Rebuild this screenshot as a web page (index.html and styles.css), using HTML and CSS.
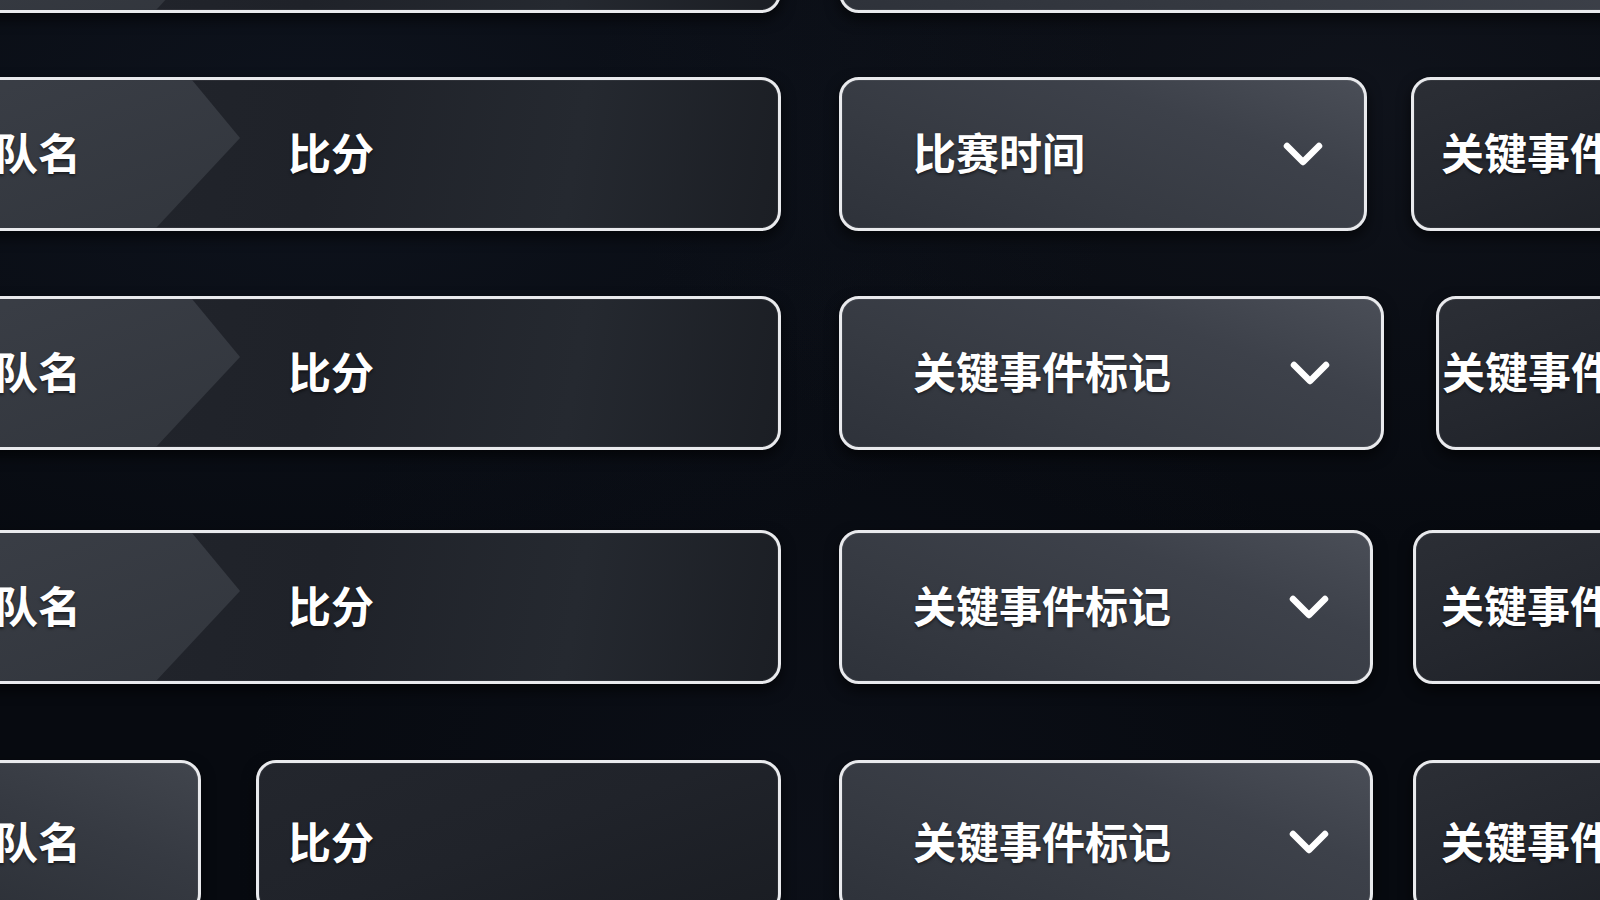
FILE: index.html
```html
<!DOCTYPE html>
<html>

<head>
    <meta charset="UTF-8" />
    <title>比赛信息面板</title>
    <link rel="stylesheet" href="styles.css">
</head>

<body>
    <main class="board">
        <div class="row row-top">
            <div class="card card-score"></div>
            <div class="card card-select card-open"></div>
        </div>

        <div class="row row-1">
            <div class="card card-score">
                <span class="team">队名</span>
                <span class="score">比分</span>
            </div>
            <div class="card card-select">
                <span class="label">比赛时间</span>
                <svg class="chevron" viewBox="0 0 40 24"><polyline points="4,4 20,20 36,4" /></svg>
            </div>
            <div class="card card-event">
                <span class="label">关键事件标记</span>
            </div>
        </div>

        <div class="row row-2">
            <div class="card card-score">
                <span class="team">队名</span>
                <span class="score">比分</span>
            </div>
            <div class="card card-select">
                <span class="label">关键事件标记</span>
                <svg class="chevron" viewBox="0 0 40 24"><polyline points="4,4 20,20 36,4" /></svg>
            </div>
            <div class="card card-event">
                <span class="label">关键事件标记</span>
            </div>
        </div>

        <div class="row row-3">
            <div class="card card-score">
                <span class="team">队名</span>
                <span class="score">比分</span>
            </div>
            <div class="card card-select">
                <span class="label">关键事件标记</span>
                <svg class="chevron" viewBox="0 0 40 24"><polyline points="4,4 20,20 36,4" /></svg>
            </div>
            <div class="card card-event">
                <span class="label">关键事件标记</span>
            </div>
        </div>

        <div class="row row-4">
            <div class="card card-team">
                <span class="label">队名</span>
            </div>
            <div class="card card-points">
                <span class="label">比分</span>
            </div>
            <div class="card card-select">
                <span class="label">关键事件标记</span>
                <svg class="chevron" viewBox="0 0 40 24"><polyline points="4,4 20,20 36,4" /></svg>
            </div>
            <div class="card card-event">
                <span class="label">关键事件标记</span>
            </div>
        </div>
    </main>
</body>

</html>
```

FILE: styles.css
```css
html,
body {
    height: 100%;
}

body {
    margin: 0;
    overflow: hidden;
    font-family: "Noto Sans CJK SC", "Noto Sans", sans-serif;
    color: #fff;
    background-color: #070a10;
    background-image:
        radial-gradient(ellipse at 20% 15%, rgba(30, 40, 60, 0.3), transparent 45%),
        radial-gradient(ellipse at 85% 10%, rgba(40, 45, 60, 0.25), transparent 40%),
        radial-gradient(ellipse at 50% 95%, rgba(25, 30, 45, 0.25), transparent 50%);
}

.board {
    display: flex;
    flex-direction: column;
    margin-top: -141px;
    margin-left: -60px;
}

.row {
    display: flex;
    height: 154px;
}

.row-1 {
    margin-top: 64px;
}

.row-2 {
    margin-top: 65px;
}

.row-3 {
    margin-top: 80px;
}

.row-4 {
    margin-top: 76px;
}

.card {
    position: relative;
    box-sizing: border-box;
    height: 154px;
    flex-shrink: 0;
    display: flex;
    align-items: center;
    padding-bottom: 5px;
    border: 3px solid #e9eaed;
    border-radius: 20px;
    overflow: hidden;
    font-size: 43px;
    font-weight: bold;
    line-height: 1;
    white-space: nowrap;
    box-shadow: 0 6px 14px rgba(0, 0, 0, 0.65), inset 0 0 0 1px rgba(255, 255, 255, 0.06);
}

.card span {
    position: relative;
    text-shadow: 0 2px 3px rgba(0, 0, 0, 0.5);
}

/* team + score strip */
.card-score {
    width: 841px;
    padding-left: 52px;
    background: linear-gradient(100deg, #23262d 0%, #1f2229 45%, #252930 75%, #1b1e24 100%);
}

.card-score::before {
    content: "";
    position: absolute;
    inset: 0;
    background: linear-gradient(160deg, #3a3e46 0%, #31353c 60%, #2b2f36 100%);
    clip-path: polygon(0 0, 249px 0, 297px 58px, 213px 100%, 0 100%);
}

.team {
    width: 233px;
}

.score {
    margin-left: 60px;
}

/* dropdown */
.card-select {
    width: 534px;
    margin-left: 58px;
    padding-left: 71px;
    padding-right: 41px;
    justify-content: space-between;
    background: linear-gradient(200deg, #4a4e57 0%, #3d414a 30%, #363a42 65%, #2e323a 100%);
}

.card-open {
    width: 900px;
}

.row-1 .card-select {
    width: 528px;
}

.row-2 .card-select {
    width: 545px;
    padding-right: 51px;
}

.chevron {
    width: 40px;
    height: 24px;
    margin-top: 5px;
    flex-shrink: 0;
    fill: none;
    stroke: #fff;
    stroke-width: 6.5;
    stroke-linecap: round;
    stroke-linejoin: round;
}

/* event column, cut by the window */
.card-event {
    width: 320px;
    margin-left: 40px;
    padding-left: 27px;
    background: linear-gradient(160deg, #2b2e35 0%, #24272e 50%, #1c1f25 100%);
}

.row-1 .card-event {
    margin-left: 44px;
}

.row-2 .card-event {
    margin-left: 52px;
    padding-left: 3px;
}

.row-3 .card-event,
.row-4 .card-event {
    padding-left: 25px;
}

/* last row: split team and score */
.card-team {
    width: 261px;
    padding-left: 52px;
    background: linear-gradient(200deg, #41454d 0%, #363a42 45%, #2c3037 100%);
}

.card-points {
    width: 525px;
    margin-left: 55px;
    padding-left: 29px;
    background: linear-gradient(160deg, #23262d 0%, #20232a 50%, #1a1d23 100%);
}

.row-4 .card {
    align-items: flex-start;
    padding-top: 56px;
}

.row-4 .chevron {
    margin-top: 11px;
}
```
